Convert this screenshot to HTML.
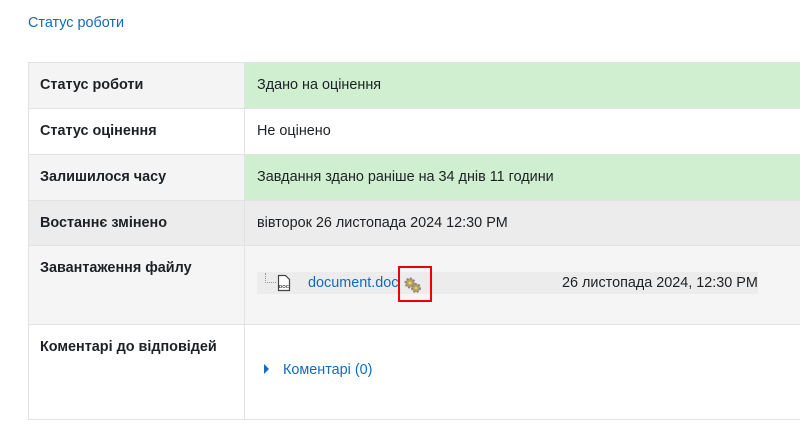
<!DOCTYPE html>
<html><head><meta charset="utf-8"><style>
body{margin:0;width:800px;height:433px;background:#fff;font-family:"Liberation Sans",sans-serif;font-size:14.4px;color:#1d2125;position:relative;overflow:hidden}
a{color:#0f6cbf;text-decoration:none}
.t{position:absolute;left:28px;top:62px;width:800px;border:1px solid #e2e2e4;border-right:none}
.r{position:relative;border-top:1px solid #e2e2e4;display:flex}
.r:first-child{border-top:none}
.l{border-right:1px solid #e2e2e4;padding-left:11px;font-weight:bold;box-sizing:border-box;width:216px}
.v{flex:1;padding-left:12px}
.g{background:#d0efd0}
.lg{background:#f4f4f5}
</style></head><body>
<a style="position:absolute;left:28px;top:15px">Статус роботи</a>
<div class="t">
 <div class="r" style="height:45px;line-height:45px"><div class="l lg">Статус роботи</div><div class="v g">Здано на оцінення</div></div>
 <div class="r" style="height:45px;line-height:45px"><div class="l">Статус оцінення</div><div class="v">Не оцінено</div></div>
 <div class="r" style="height:45px;line-height:45px"><div class="l lg">Залишилося часу</div><div class="v g">Завдання здано раніше на 34 днів 11 години</div></div>
 <div class="r" style="height:44px;line-height:44px;background:#ececec"><div class="l">Востаннє змінено</div><div class="v">вівторок 26 листопада 2024 12:30 PM</div></div>
 <div class="r" style="height:78px;background:#f5f5f5"><div class="l" style="padding-top:14px">Завантаження файлу</div><div class="v">
   <div style="position:absolute;left:228px;top:26px;width:501px;height:22px;background:#ececec"></div>
   <div style="position:absolute;left:236px;top:27px;width:10px;height:9px;border-left:1px dotted #999;border-bottom:1px dotted #999"></div>
   <svg style="position:absolute;left:248px;top:28px" width="14" height="18" viewBox="0 0 14 18"><path d="M1.5 1.5h7l4 4v11h-11z" fill="#fff" stroke="#444" stroke-width="1.2"/><text x="2" y="14" font-size="4.5" font-weight="bold" fill="#333" font-family="Liberation Sans">DOC</text></svg>
   <a style="position:absolute;left:279px;top:29px">document.doc</a>
   <div style="position:absolute;left:369px;top:20px;width:34px;height:36px;border:2px solid #e00;box-sizing:border-box"></div>
   <svg style="position:absolute;left:374px;top:30px" width="20" height="18" viewBox="0 0 20 18"><circle cx="7" cy="7" r="4.5" fill="#b8a060" stroke="#888" stroke-width="2" stroke-dasharray="2 1.5"/><circle cx="7" cy="7" r="1.5" fill="#f0d060"/><circle cx="13" cy="12" r="4" fill="#b8a060" stroke="#888" stroke-width="2" stroke-dasharray="2 1.5"/><circle cx="13" cy="12" r="1.3" fill="#f0d060"/></svg>
   <div style="position:absolute;left:533px;top:29px">26 листопада 2024, 12:30 PM</div>
 </div></div>
 <div class="r" style="height:94px"><div class="l" style="padding-top:14px">Коментарі до відповідей</div><div class="v">
   <div style="position:absolute;left:235px;top:39px;width:0;height:0;border-left:5px solid #0f6cbf;border-top:5px solid transparent;border-bottom:5px solid transparent"></div>
   <a style="position:absolute;left:254px;top:37px">Коментарі (0)</a>
 </div></div>
</div>
</body></html>
